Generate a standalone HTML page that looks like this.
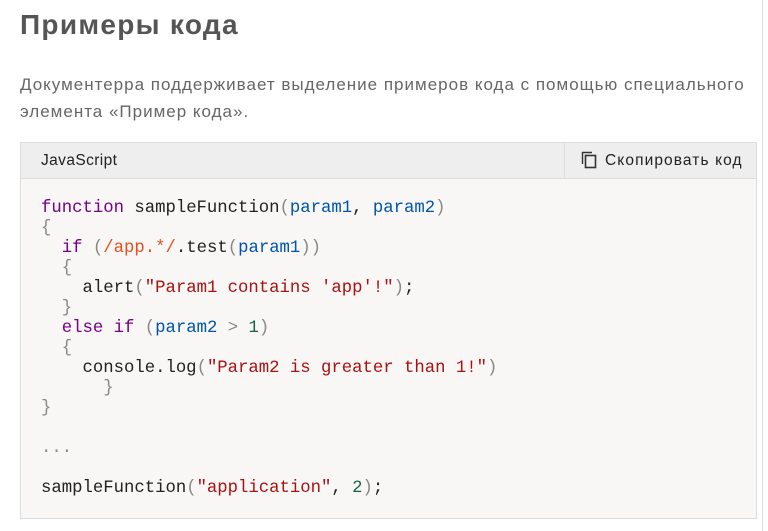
<!DOCTYPE html>
<html><head><meta charset="utf-8"><style>
body{margin:0;background:#fff;width:768px;height:531px;overflow:hidden;position:relative;font-family:"Liberation Sans",sans-serif}
.sb{position:absolute;right:0;top:0;width:5px;height:531px;border-left:1px solid #ddd;background:#fff}
h1{position:absolute;left:20px;top:9px;margin:0;font-size:28px;letter-spacing:1.3px;font-weight:bold;color:#555}
p{position:absolute;left:20px;top:71px;margin:0;width:742px;font-size:17px;letter-spacing:1px;line-height:27px;color:#666}
.box{position:absolute;left:20px;top:142px;width:735px;height:375px;border:1px solid #ddd;background:#f8f7f6}
.hd{height:35px;background:#eee;border-bottom:1px solid #ddd;position:relative}
.lang{position:absolute;left:20px;top:9px;font-size:15.5px;letter-spacing:0.4px;color:#222}
.cp{position:absolute;right:0;top:0;height:35px;width:191px;border-left:1px solid #ddd;font-size:15.5px;letter-spacing:1.1px;color:#222}
.cp span{position:absolute;left:40px;top:9px}
.cp svg{position:absolute;left:16px;top:8px}
pre{position:absolute;left:20px;top:56px;margin:0;font-family:"Liberation Mono",monospace;font-size:17.3px;line-height:20px;color:#222}
.k{color:#708}.v{color:#05a}.r{color:#e5501f}.s{color:#a11}.n{color:#164}.b{color:#888}
</style></head><body>
<div class="sb"></div>
<h1>Примеры кода</h1>
<p>Документерра поддерживает выделение примеров кода с помощью специального<br>элемента «Пример кода».</p>
<div class="box">
<div class="hd"><span class="lang">JavaScript</span>
<div class="cp"><svg width="16" height="18" viewBox="0 0 16 18"><path d="M1.5 13V1.5H11" fill="none" stroke="#333" stroke-width="1.4"/><rect x="4.5" y="4.5" width="10" height="12" fill="none" stroke="#333" stroke-width="1.6"/></svg><span>Скопировать код</span></div></div>
<pre><span class="k">function</span> sampleFunction<span class="b">(</span><span class="v">param1</span>, <span class="v">param2</span><span class="b">)</span>
<span class="b">{</span>
  <span class="k">if</span> <span class="b">(</span><span class="r">/app.*/</span>.test<span class="b">(</span><span class="v">param1</span><span class="b">))</span>
  <span class="b">{</span>
    alert<span class="b">(</span><span class="s">"Param1 contains 'app'!"</span><span class="b">)</span>;
  <span class="b">}</span>
  <span class="k">else</span> <span class="k">if</span> <span class="b">(</span><span class="v">param2</span> <span class="b">&gt;</span> <span class="n">1</span><span class="b">)</span>
  <span class="b">{</span>
    console.log<span class="b">(</span><span class="s">"Param2 is greater than 1!"</span><span class="b">)</span>
      <span class="b">}</span>
<span class="b">}</span>

<span class="b">...</span>

sampleFunction<span class="b">(</span><span class="s">"application"</span>, <span class="n">2</span><span class="b">)</span>;</pre>
</div>
</body></html>
